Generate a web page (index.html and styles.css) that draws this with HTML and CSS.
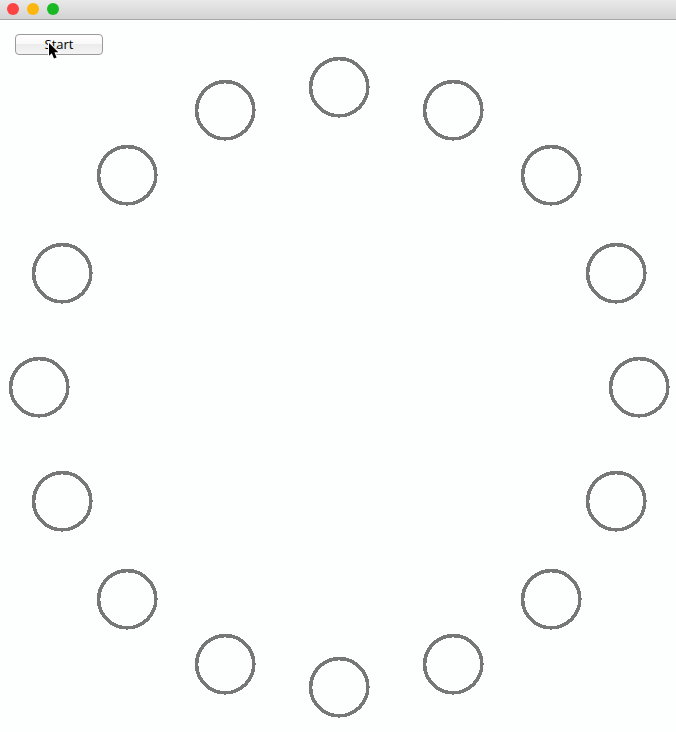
FILE: index.html
```html
<!DOCTYPE html>
<html lang="en">
<head>
<meta charset="utf-8">
<title>Ring</title>
<link rel="stylesheet" href="styles.css">
</head>
<body>
<header class="titlebar">
  <span class="light close"></span>
  <span class="light minimize"></span>
  <span class="light expand"></span>
</header>
<main class="canvas">
  <svg class="ring" viewBox="0 0 676 712" aria-hidden="true">
    <g fill="none" stroke="#777" stroke-width="3.6" shape-rendering="crispEdges">
      <circle cx="339.2" cy="67.2" r="28.6"/>
      <circle cx="453.2" cy="90.2" r="28.6"/>
      <circle cx="551.2" cy="155.2" r="28.6"/>
      <circle cx="616.2" cy="253.2" r="28.6"/>
      <circle cx="639.2" cy="367.2" r="28.6"/>
      <circle cx="616.2" cy="481.2" r="28.6"/>
      <circle cx="551.2" cy="579.2" r="28.6"/>
      <circle cx="453.2" cy="644.2" r="28.6"/>
      <circle cx="339.2" cy="667.2" r="28.6"/>
      <circle cx="225.2" cy="644.2" r="28.6"/>
      <circle cx="127.2" cy="579.2" r="28.6"/>
      <circle cx="62.2" cy="481.2" r="28.6"/>
      <circle cx="39.2" cy="367.2" r="28.6"/>
      <circle cx="62.2" cy="253.2" r="28.6"/>
      <circle cx="127.2" cy="155.2" r="28.6"/>
      <circle cx="225.2" cy="90.2" r="28.6"/>
    </g>
  </svg>
  <button class="start" type="button">Start</button>
  <svg class="pointer" viewBox="0 0 14 20" aria-hidden="true">
    <path d="M2 2V14.8L4.8 12.2L7 17.6L9.6 16.5L7.4 11.3H11.3Z" fill="#000" stroke="#fff" stroke-width="2" paint-order="stroke"/>
  </svg>
</main>
</body>
</html>
```
FILE: styles.css
```css
* {
  box-sizing: border-box;
}

body {
  margin: 0;
  background: #fdfefe;
  font-family: "Open Sans", "Noto Sans", sans-serif;
}

.titlebar {
  display: flex;
  gap: 8px;
  height: 20px;
  padding: 3px 7px;
  border-bottom: 1px solid #aaa7a9;
  background: linear-gradient(#e9e9e9, #d3d3d3);
}

.light {
  width: 12px;
  height: 12px;
  border-radius: 50%;
}

.close {
  background: #fc4542;
}

.minimize {
  background: #fdb60d;
}

.expand {
  background: #18b925;
}

.canvas {
  position: relative;
}

.ring {
  display: block;
  width: 100%;
}

.start {
  position: absolute;
  top: 14px;
  left: 15px;
  width: 88px;
  height: 21px;
  padding: 0 0 1px;
  border: 1px solid #9a9a9a;
  border-radius: 4px;
  background: linear-gradient(#fff 0%, #f9f9f9 45%, #ececec 50%, #f4f4f4 100%);
  color: #000;
  font: 500 13px/18px "Open Sans", "Noto Sans", sans-serif;
}

.pointer {
  position: absolute;
  top: 21px;
  left: 47px;
  width: 14px;
  height: 20px;
  pointer-events: none;
}
```
